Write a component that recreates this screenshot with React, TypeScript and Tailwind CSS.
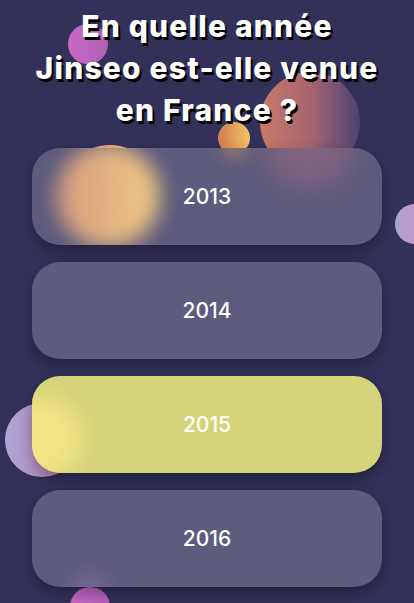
import { useState } from 'react';

type Answer = { label: string; glows: string[] };

// glows = soft blurred light from the bubbles sitting behind each glass card
const answers: Answer[] = [
  {
    label: '2013',
    glows: [
      'left-[24px] top-[-4px] h-[104px] w-[104px] bg-linear-to-r from-[#d69a80] to-[#eecb82] blur-[10px]',
      'left-[232px] top-[-40px] h-[80px] w-[90px] bg-[#a46c80] opacity-50 blur-[14px]',
      'left-[190px] top-[-14px] h-[26px] w-[26px] bg-[#e6a060] opacity-40 blur-[8px]',
    ],
  },
  { label: '2014', glows: [] },
  {
    label: '2015',
    glows: ['left-[-34px] top-[22px] h-[80px] w-[84px] bg-[#f4e486] blur-[12px]'],
  },
  {
    label: '2016',
    glows: ['left-[38px] top-[84px] h-[30px] w-[40px] bg-[#8a70a8] opacity-60 blur-[10px]'],
  },
];

export default function App() {
  const [picked] = useState('2015');

  return (
    <div className="relative h-[603px] w-full overflow-hidden bg-[#33305a] font-['Inter',sans-serif]">
      {/* floating bubbles */}
      <div className="absolute left-[68px] top-[24px] h-[40px] w-[40px] rounded-full bg-linear-to-r from-[#c868c4] to-[#b060b8]" />
      <div className="absolute left-[260px] top-[72px] h-[100px] w-[100px] rounded-full bg-linear-to-r from-[#c87a66] via-[#a86470] to-[#4c4274]" />
      <div className="absolute left-[218px] top-[122px] h-[32px] w-[32px] rounded-full bg-linear-to-r from-[#d27c50] to-[#f2c464]" />
      <div className="absolute left-[60px] top-[145px] h-[100px] w-[100px] rounded-full bg-linear-to-r from-[#d88e78] to-[#f4d080]" />
      <div className="absolute left-[395px] top-[204px] h-[40px] w-[40px] rounded-full bg-linear-to-r from-[#a8a4d4] to-[#d690c4]" />
      <div className="absolute left-[5px] top-[403px] h-[74px] w-[74px] rounded-full bg-linear-to-r from-[#a8a8d6] to-[#c070a8]" />
      <div className="absolute left-[70px] top-[587px] h-[40px] w-[40px] rounded-full bg-linear-to-r from-[#c868c4] to-[#b060b8]" />

      <div className="relative z-10 flex flex-col items-center px-8 pt-[5px]">
        <h1 className="text-center text-[30px] font-extrabold leading-[42px] tracking-[1.2px] text-white [text-shadow:2px_3px_0_#000]">
          En quelle année
          <br />
          Jinseo est-elle venue
          <br />
          en France ?
        </h1>

        <div className="mt-[17px] flex w-full flex-col gap-[17px]">
          {answers.map((a) => (
            <button
              key={a.label}
              className={`relative flex h-[97px] w-full items-center justify-center overflow-hidden rounded-[28px] text-[21px] font-medium text-white shadow-[0_6px_14px_rgba(0,0,0,0.3)] ${
                a.label === picked ? 'bg-[#d4d47a]' : 'bg-[#5d5b7e]'
              }`}
            >
              {a.glows.map((g) => (
                <span key={g} className={`absolute rounded-full ${g}`} />
              ))}
              <span className="relative">{a.label}</span>
            </button>
          ))}
        </div>
      </div>
    </div>
  );
}
